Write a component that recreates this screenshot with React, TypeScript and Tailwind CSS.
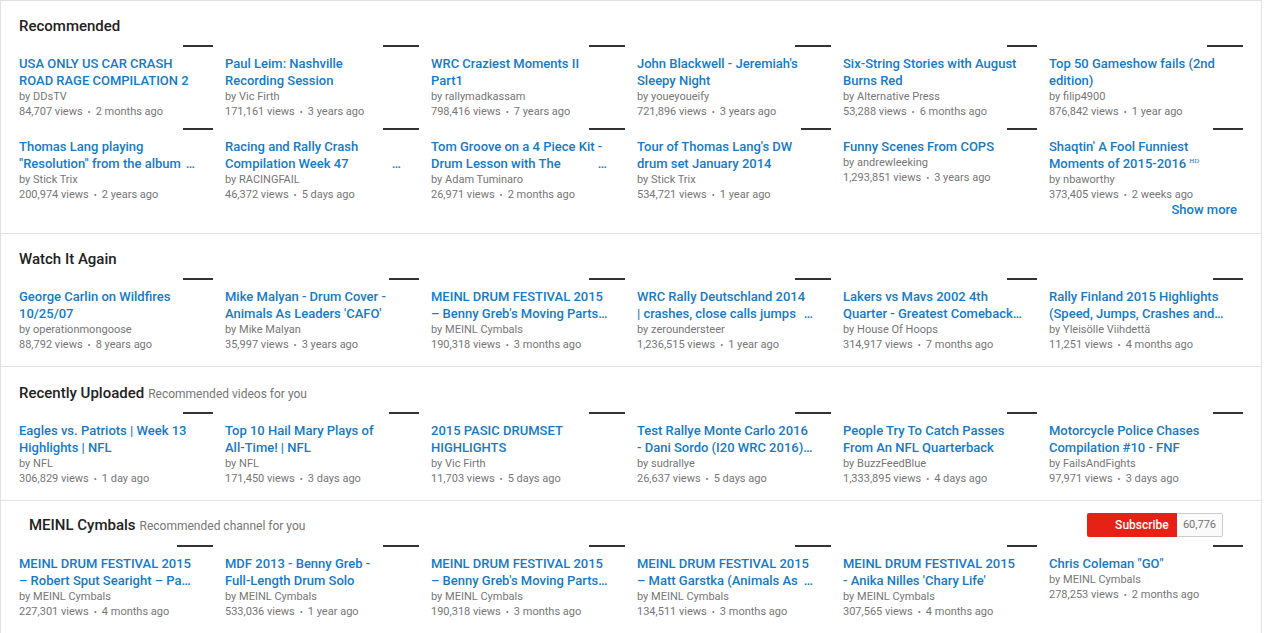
type Video = {
  lines: string[];
  more?: boolean;
  clip?: boolean;
  hd?: boolean;
  by: string;
  views: string;
  ago: string;
  bar: number;
};

type Section = {
  title: string;
  sub?: string;
  channel?: boolean;
  showMore?: boolean;
  pad: string;
  videos: Video[];
};

const sections: Section[] = [
  {
    title: "Recommended",
    showMore: true,
    pad: "pt-[16px] pb-[14px]",
    videos: [
      { lines: ["USA ONLY US CAR CRASH", "ROAD RAGE COMPILATION 2016"], clip: true, by: "DDsTV", views: "84,707", ago: "2 months ago", bar: 30 },
      { lines: ["Paul Leim: Nashville", "Recording Session"], by: "Vic Firth", views: "171,161", ago: "3 years ago", bar: 36 },
      { lines: ["WRC Craziest Moments II", "Part1"], by: "rallymadkassam", views: "798,416", ago: "7 years ago", bar: 36 },
      { lines: ["John Blackwell - Jeremiah's", "Sleepy Night"], by: "youeyoueify", views: "721,896", ago: "3 years ago", bar: 36 },
      { lines: ["Six-String Stories with August", "Burns Red"], by: "Alternative Press", views: "53,288", ago: "6 months ago", bar: 30 },
      { lines: ["Top 50 Gameshow fails (2nd", "edition)"], by: "filip4900", views: "876,842", ago: "1 year ago", bar: 36 },
      { lines: ["Thomas Lang playing", "\"Resolution\" from the album"], more: true, by: "Stick Trix", views: "200,974", ago: "2 years ago", bar: 30 },
      { lines: ["Racing and Rally Crash", "Compilation Week 47"], more: true, by: "RACINGFAIL", views: "46,372", ago: "5 days ago", bar: 36 },
      { lines: ["Tom Groove on a 4 Piece Kit -", "Drum Lesson with The"], more: true, by: "Adam Tuminaro", views: "26,971", ago: "2 months ago", bar: 36 },
      { lines: ["Tour of Thomas Lang's DW", "drum set January 2014"], by: "Stick Trix", views: "534,721", ago: "1 year ago", bar: 30 },
      { lines: ["Funny Scenes From COPS"], by: "andrewleeking", views: "1,293,851", ago: "3 years ago", bar: 30 },
      { lines: ["Shaqtin' A Fool Funniest", "Moments of 2015-2016"], hd: true, by: "nbaworthy", views: "373,405", ago: "2 weeks ago", bar: 30 },
    ],
  },
  {
    title: "Watch It Again",
    pad: "pt-[16px] pb-[14px]",
    videos: [
      { lines: ["George Carlin on Wildfires", "10/25/07"], by: "operationmongoose", views: "88,792", ago: "8 years ago", bar: 30 },
      { lines: ["Mike Malyan - Drum Cover -", "Animals As Leaders 'CAFO'"], by: "Mike Malyan", views: "35,997", ago: "3 years ago", bar: 30 },
      { lines: ["MEINL DRUM FESTIVAL 2015", "– Benny Greb's Moving Parts…"], by: "MEINL Cymbals", views: "190,318", ago: "3 months ago", bar: 36 },
      { lines: ["WRC Rally Deutschland 2014", "| crashes, close calls jumps"], more: true, by: "zeroundersteer", views: "1,236,515", ago: "1 year ago", bar: 36 },
      { lines: ["Lakers vs Mavs 2002 4th", "Quarter - Greatest Comeback…"], by: "House Of Hoops", views: "314,917", ago: "7 months ago", bar: 30 },
      { lines: ["Rally Finland 2015 Highlights", "(Speed, Jumps, Crashes and…"], by: "Yleisölle Viihdettä", views: "11,251", ago: "4 months ago", bar: 30 },
    ],
  },
  {
    title: "Recently Uploaded",
    sub: "Recommended videos for you",
    pad: "pt-[17px] pb-[14px]",
    videos: [
      { lines: ["Eagles vs. Patriots | Week 13", "Highlights | NFL"], by: "NFL", views: "306,829", ago: "1 day ago", bar: 30 },
      { lines: ["Top 10 Hail Mary Plays of", "All-Time! | NFL"], by: "NFL", views: "171,450", ago: "3 days ago", bar: 30 },
      { lines: ["2015 PASIC DRUMSET", "HIGHLIGHTS"], by: "Vic Firth", views: "11,703", ago: "5 days ago", bar: 36 },
      { lines: ["Test Rallye Monte Carlo 2016", "- Dani Sordo (I20 WRC 2016)…"], by: "sudrallye", views: "26,637", ago: "5 days ago", bar: 36 },
      { lines: ["People Try To Catch Passes", "From An NFL Quarterback"], by: "BuzzFeedBlue", views: "1,333,895", ago: "4 days ago", bar: 30 },
      { lines: ["Motorcycle Police Chases", "Compilation #10 - FNF"], by: "FailsAndFights", views: "97,971", ago: "3 days ago", bar: 30 },
    ],
  },
  {
    title: "MEINL Cymbals",
    sub: "Recommended channel for you",
    channel: true,
    pad: "pt-[12px] pb-[14px]",
    videos: [
      { lines: ["MEINL DRUM FESTIVAL 2015", "– Robert Sput Searight – Pa…"], by: "MEINL Cymbals", views: "227,301", ago: "4 months ago", bar: 36 },
      { lines: ["MDF 2013 - Benny Greb -", "Full-Length Drum Solo"], by: "MEINL Cymbals", views: "533,036", ago: "1 year ago", bar: 36 },
      { lines: ["MEINL DRUM FESTIVAL 2015", "– Benny Greb's Moving Parts…"], by: "MEINL Cymbals", views: "190,318", ago: "3 months ago", bar: 36 },
      { lines: ["MEINL DRUM FESTIVAL 2015", "– Matt Garstka (Animals As"], more: true, by: "MEINL Cymbals", views: "134,511", ago: "3 months ago", bar: 36 },
      { lines: ["MEINL DRUM FESTIVAL 2015", "- Anika Nilles 'Chary Life'"], by: "MEINL Cymbals", views: "307,565", ago: "4 months ago", bar: 30 },
      { lines: ["Chris Coleman \"GO\""], by: "MEINL Cymbals", views: "278,253", ago: "2 months ago", bar: 30 },
    ],
  },
];

function VideoItem({ v }: { v: Video }) {
  return (
    <div className="w-[194px]">
      <div className="flex justify-end">
        <div className="h-[2px] bg-[#333]" style={{ width: v.bar }} />
      </div>
      <div className="mt-[8px] text-[13px] leading-[17px] font-medium text-[#167ac6]">
        {v.lines.map((line, i) => {
          const last = i === v.lines.length - 1;
          if (last && v.more) {
            return (
              <div key={i} className="flex h-[17px] w-[176px] justify-between whitespace-nowrap">
                <span className="overflow-hidden">{line}</span>
                <span className="pl-1">…</span>
              </div>
            );
          }
          return (
            <div
              key={i}
              className={`${last && v.clip ? "w-[170px]" : "w-[182px]"} h-[17px] overflow-hidden whitespace-nowrap`}
            >
              {line}
              {last && v.hd && (
                <span className="relative -top-[5px] ml-[3px] text-[7px] leading-[0] font-['Liberation_Serif',serif]">HD</span>
              )}
            </div>
          );
        })}
      </div>
      <div className="text-[11px] leading-[15px] text-[#767676]">
        <div className="h-[15px]">by {v.by}</div>
        <div className="h-[15px]">
          {v.views} views<span className="mx-[5px] text-[9px] leading-[0]">•</span>
          {v.ago}
        </div>
      </div>
    </div>
  );
}

export default function App() {
  return (
    <div className="w-[1262px] bg-white border border-[#e2e2e2] font-['Roboto','Liberation_Sans',sans-serif]">
      {sections.map((s, si) => (
        <div
          key={s.title}
          className={`px-[18px] ${s.pad} ${s.channel ? "" : "border-b border-[#e2e2e2]"}`}
        >
          {s.channel ? (
            <div className="flex h-[24px] items-center justify-between">
              <div className="flex items-baseline pl-[10px]">
                <span className="text-[15px] leading-[18px] font-medium text-[#222]">{s.title}</span>
                <span className="ml-[4px] text-[12px] text-[#767676]">{s.sub}</span>
              </div>
              <div className="mr-[20px] flex h-[24px]">
                <button className="h-[24px] w-[90px] rounded-l-[2px] bg-[#e62117] pl-[20px] text-[12px] font-medium text-white">
                  Subscribe
                </button>
                <div className="flex h-[24px] items-center rounded-r-[2px] border border-l-0 border-[#ccc] bg-[#fafafa] px-[6px] text-[11px] text-[#737373]">
                  60,776
                </div>
              </div>
            </div>
          ) : (
            <div className="flex h-[18px] items-baseline">
              <span className="text-[15px] leading-[18px] font-medium text-[#222]">{s.title}</span>
              {s.sub && <span className="ml-[4px] text-[12px] text-[#767676]">{s.sub}</span>}
            </div>
          )}
          <div className={`${s.channel ? "mt-[8px]" : "mt-[10px]"} grid grid-cols-[repeat(6,194px)] gap-x-[12px] gap-y-[9px]`}>
            {s.videos.map((v, i) => (
              <VideoItem key={si + "-" + i} v={v} />
            ))}
          </div>
          {s.showMore && (
            <div className="pr-[6px] pb-[2px] text-right text-[13px] leading-[15px] font-medium text-[#167ac6]">
              Show more
            </div>
          )}
        </div>
      ))}
    </div>
  );
}
